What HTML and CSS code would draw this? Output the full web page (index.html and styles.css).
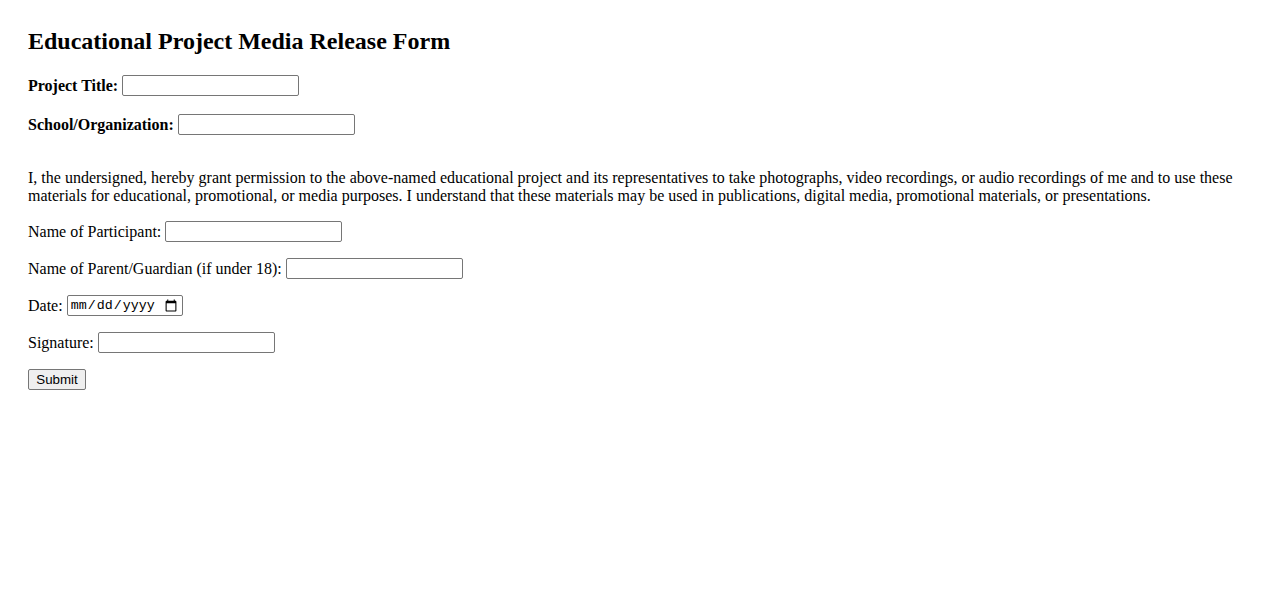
FILE: index.html
```html
<!DOCTYPE html>
<html lang="en">
<head>
<meta charset="utf-8">
<title>Educational Project Media Release Form</title>
<link rel="stylesheet" href="styles.css">
</head>
<body>
<div class="page">
  <h2 class="title">Educational Project Media Release Form</h2>
  <form class="form">
    <div class="row row-bold">
      <label class="label-bold" for="project">Project Title:</label>
      <input class="text-input" type="text" id="project">
    </div>
    <div class="row row-bold">
      <label class="label-bold" for="school">School/Organization:</label>
      <input class="text-input" type="text" id="school">
    </div>
    <p class="statement">I, the undersigned, hereby grant permission to the above-named educational project and its representatives to take photographs, video recordings, or audio recordings of me and to use these materials for educational, promotional, or media purposes. I understand that these materials may be used in publications, digital media, promotional materials, or presentations.</p>
    <div class="row">
      <label for="participant">Name of Participant:</label>
      <input class="text-input" type="text" id="participant">
    </div>
    <div class="row">
      <label for="guardian">Name of Parent/Guardian (if under 18):</label>
      <input class="text-input" type="text" id="guardian">
    </div>
    <div class="row">
      <label for="date">Date:</label>
      <input class="date-input" type="date" id="date">
    </div>
    <div class="row">
      <label for="signature">Signature:</label>
      <input class="text-input" type="text" id="signature">
    </div>
    <div class="row">
      <button class="submit" type="submit">Submit</button>
    </div>
  </form>
</div>
</body>
</html>
```

FILE: styles.css
```css
html, body {
  background: #ffffff;
}
body {
  margin: 8px;
  font-family: "Liberation Serif", "Times New Roman", serif;
  font-size: 16px;
  color: #000000;
}
.page {
  padding: 20px;
}
.title {
  margin: 0 0 21px 0;
  font-size: 24px;
  font-weight: bold;
  line-height: 26px;
}
.form {
  margin: 0;
}
.row {
  display: flex;
  align-items: center;
  gap: 4px;
  height: 21px;
  margin: 0 0 16px 0;
}
.row-bold {
  margin-bottom: 18px;
}
.label-bold {
  font-weight: bold;
}
.statement {
  margin: 0 0 16px 0;
  padding-top: 16px;
  line-height: 18px;
}
.text-input {
  box-sizing: border-box;
  width: 177px;
  height: 21px;
  margin: 0;
  padding: 1px 2px;
  border: 1px solid #767676;
  border-radius: 2px;
  font-family: "Liberation Sans", Arial, sans-serif;
  font-size: 13.333px;
}
.date-input {
  box-sizing: border-box;
  width: 116px;
  height: 21px;
  margin: 0;
  padding: 1px 2px;
  border: 1px solid #767676;
  border-radius: 2px;
  font-family: "Liberation Mono", "Courier New", monospace;
  font-size: 13.333px;
}
.submit {
  box-sizing: border-box;
  height: 21px;
  width: 58px;
  margin: 0;
  padding: 1px 6px;
  border: 1px solid #767676;
  border-radius: 2px;
  background: #efefef;
  font-family: "Liberation Sans", Arial, sans-serif;
  font-size: 13.333px;
  color: #000000;
}
```
